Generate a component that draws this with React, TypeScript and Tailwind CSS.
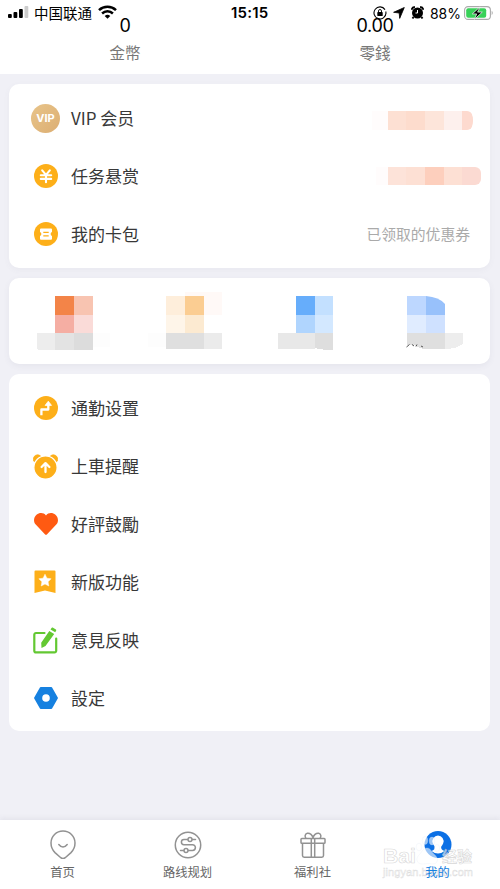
import type { ReactNode } from 'react';

interface MenuItem {
  label: string;
  icon: ReactNode;
  extra?: ReactNode;
}

const VipIcon = () => (
  <div className="w-[29px] h-[29px] shrink-0 rounded-full bg-linear-to-br from-[#e8c48a] to-[#dcae72] flex items-center justify-center text-white font-bold text-[11px] font-['Inter',sans-serif]">
    VIP
  </div>
);

const YenIcon = () => (
  <svg width="24" height="24" viewBox="0 0 24 24" fill="none">
    <circle cx="12" cy="12" r="12" fill="#fdaf19" />
    <path d="M8.2 6.3l3.800 4.6 3.800-4.6M12 11v7.2M6.8 11.300h10.4M6.8 14.900h10.4" stroke="#fff" strokeWidth="2.100" strokeLinecap="round" />
  </svg>
);

const TicketIcon = () => (
  <svg width="24" height="24" viewBox="0 0 24 24" fill="none">
    <circle cx="12" cy="12" r="12" fill="#fdaf19" />
    <path d="M7 6.4h10a1 1 0 0 1 1 1v2.700a2 2 0 0 0 0 3.800v2.900a1 1 0 0 1-1 1H7a1 1 0 0 1-1-1v-2.900a2 2 0 0 0 0-3.800V7.4a1 1 0 0 1 1-1z" fill="#fff" />
    <path d="M9.3 10.4h5.4M9.3 13.8h5.4" stroke="#fdaf19" strokeWidth="1.2" />
  </svg>
);

const RouteIcon = () => (
  <svg width="24" height="24" viewBox="0 0 24 24" fill="none">
    <circle cx="12" cy="12" r="12" fill="#fdaf19" />
    <path d="M7.400 19.200v-5.700h6.900V8" stroke="#fff" strokeWidth="2.300" strokeLinejoin="round" />
    <path d="M14.300 5.200l3.200 4.200h-6.400z" fill="#fff" stroke="#fff" strokeWidth=".8" strokeLinejoin="round" />
  </svg>
);

const AlarmIcon = () => (
  <svg width="25" height="25" viewBox="0 0 25 25" fill="none">
    <path d="M.8 7.200A4.200 4.200 0 0 1 8.500 3.200L2 8zM24.200 7.200a4.200 4.200 0 0 0-7.700-4L23 8z" fill="#fdaf19" stroke="#fdaf19" strokeWidth=".8" />
    <circle cx="12.500" cy="13.500" r="11.600" fill="#fdaf19" stroke="#fff" strokeWidth="1.200" />
    <path d="M12.500 18V9.200M8.600 13l3.900-3.900 3.900 3.900" stroke="#fff" strokeWidth="2.300" strokeLinecap="round" strokeLinejoin="round" />
  </svg>
);

const HeartIcon = () => (
  <svg width="24" height="22" viewBox="0 0 24 22">
    <path d="M12 2.400C14.400-.5 18.600-.6 21.500 1.800c3.200 2.900 3.300 7.400.3 10.300l-8.700 9.200c-.6.7-1.600.7-2.200 0l-8.700-9.200C-.8 9.200-.7 4.700 2.500 1.800 5.400-.6 9.600-.5 12 2.400z" fill="#ff5a12" />
  </svg>
);

const BookmarkIcon = () => (
  <svg className="mr-px" width="22" height="24" viewBox="0 0 22 24">
    <path d="M1.500.5h19q1 0 1 1v21.500l-10.500-2.500L.5 23V1.500q0-1 1-1z" fill="#fdaf19" />
    <path d="M11 4.200l1.900 4 4.200.6-3 3 .7 4.200-3.800-2-3.800 2 .7-4.200-3-3 4.200-.6z" fill="#fff" stroke="#fff" strokeWidth=".5" strokeLinejoin="round" />
  </svg>
);

const EditIcon = () => (
  <svg width="25" height="27" viewBox="0 0 25 27" fill="none">
    <path d="M11.500 6H3a1.700 1.700 0 0 0-1.700 1.700v16A1.700 1.700 0 0 0 3 25.400h18.500a1.700 1.700 0 0 0 1.700-1.700V11.500" stroke="#63c832" strokeWidth="2.200" strokeLinecap="round" />
    <path d="M16.300 3.900l4.900 3-8.700 12.100-4 2-.3-5.200zM17.500 2.400l1-1.500q.5-.7 1.200-.3l3.200 2q.7.500.2 1.200l-.9 1.500z" fill="#63c832" />
  </svg>
);

const SettingIcon = () => (
  <svg width="24" height="22" viewBox="0 0 24 22">
    <path d="M6.700 1h10.600L23 11l-5.700 10H6.700L1 11z" fill="#1681e0" stroke="#1681e0" strokeWidth="1.800" strokeLinejoin="round" />
    <circle cx="12" cy="11" r="3.800" fill="#fff" />
  </svg>
);

const VipMask = () => (
  <div className="mr-[6px] mt-1 flex h-[19px]">
    <div className="w-4 bg-[#fffcfc]" />
    <div className="flex w-[85px] rounded-r-[4px_9px] overflow-hidden">
      <div className="w-[18px] bg-[#fde0d3]" />
      <div className="w-[19px] bg-[#fddccd]" />
      <div className="w-[19px] bg-[#fde5da]" />
      <div className="w-[18px] bg-[#fdf0ed]" />
      <div className="flex-1 rounded-r-[6px] bg-[#fddacf]" />
    </div>
  </div>
);

const TaskMask = () => (
  <div className="-mr-[2px] flex h-[18px]">
    <div className="w-3 bg-[#fffcfc]" />
    <div className="flex w-[93px]">
      <div className="w-[18px] bg-[#fde3d9]" />
      <div className="w-[19px] bg-[#fde0d4]" />
      <div className="w-[19px] bg-[#fdcfbd]" />
      <div className="w-[18px] bg-[#fde0d4]" />
      <div className="flex-1 rounded-r-[6px] bg-[#fbdad2]" />
    </div>
  </div>
);

const accountItems: MenuItem[] = [
  { label: 'VIP 会员', icon: <VipIcon />, extra: <VipMask /> },
  { label: '任务悬赏', icon: <YenIcon />, extra: <TaskMask /> },
  {
    label: '我的卡包',
    icon: <TicketIcon />,
    extra: <span className="mr-[9px] text-[14.800px] text-[#aaa]">已领取的优惠券</span>,
  },
];

const settingItems: MenuItem[] = [
  { label: '通勤设置', icon: <RouteIcon /> },
  { label: '上車提醒', icon: <AlarmIcon /> },
  { label: '好評鼓勵', icon: <HeartIcon /> },
  { label: '新版功能', icon: <BookmarkIcon /> },
  { label: '意見反映', icon: <EditIcon /> },
  { label: '設定', icon: <SettingIcon /> },
];

const MenuList = ({ items }: { items: MenuItem[] }) => (
  <>
    {items.map((item) => (
      <div key={item.label} className="flex h-[58px] items-center pl-[22px] pr-[11px]">
        <div className="flex w-[29px] justify-center">{item.icon}</div>
        <span className="ml-[11px] flex-1 text-[17px] text-[#383838]">{item.label}</span>
        {item.extra}
      </div>
    ))}
  </>
);

const StatusBar = () => (
  <div className="flex h-[25px] items-center pl-2 pr-[6px]">
    <svg width="21" height="13" viewBox="0 0 21 13">
      <rect x="0" y="8" width="3.800" height="4" rx="1" />
      <rect x="5.500" y="6" width="3.800" height="6" rx="1" />
      <rect x="11" y="3" width="3.800" height="9" rx="1" />
      <rect x="16.500" y="0" width="3.800" height="12" rx="1" fill="#ccc" />
    </svg>
    <span className="ml-[5px] text-[14.500px]">中国联通</span>
    <svg className="ml-[6px] mb-[2px]" width="19" height="14" viewBox="0 0 19 14" fill="none" stroke="#000" strokeWidth="2.500">
      <path d="M1 5.200a12.300 12.300 0 0 1 17 0M4.100 8.500a7.800 7.800 0 0 1 10.800 0" />
      <path d="M6.700 11a4.100 4.100 0 0 1 5.600 0l-2.800 2.800z" fill="#000" stroke="none" />
    </svg>
    <span className="ml-[114px] mt-[2px] text-[15px] font-semibold tracking-[0.200px] font-['Inter',sans-serif]">15:15</span>
    <div className="ml-auto flex items-center">
      <svg className="mr-px" width="14" height="14" viewBox="0 0 14 14" fill="none">
        <path d="M12 3.600A6 6 0 1 0 13 7M12.900 5.500V8" stroke="#000" strokeWidth="1.100" />
        <rect x="4.300" y="6.100" width="5.400" height="4" rx=".7" fill="#000" />
        <path d="M5.500 6.500V5a1.500 1.500 0 0 1 3 0v1.500" stroke="#000" strokeWidth=".9" />
      </svg>
      <svg className="ml-[5px]" width="12" height="12" viewBox="0 0 12 12">
        <path d="M11.300.5L6.700 11.400 6.200 6 .6 5.300z" stroke="#000" strokeWidth=".8" strokeLinejoin="round" />
      </svg>
      <svg className="ml-[6px]" width="13" height="13" viewBox="0 0 13 13" fill="none">
        <path d="M.8 3.700Q1 1.200 3.900 1M12.200 3.700Q12 1.200 9.100 1M2.500 11L1.500 12.500M10.500 11l1 1.500" stroke="#000" strokeWidth="1.900" />
        <circle cx="6.500" cy="7" r="5.500" fill="#000" />
        <path d="M6.500 4v3H4.500" stroke="#fff" />
      </svg>
      <span className="ml-[6px] mt-px text-[14px] font-['Inter',sans-serif]">88%</span>
      <svg className="ml-[3px]" width="30" height="14" viewBox="0 0 30 14">
        <rect x=".6" y=".6" width="25.800" height="12.800" rx="3.500" fill="none" stroke="#aaa" strokeWidth="1.100" />
        <rect x="2.200" y="2.200" width="20" height="9.600" rx="2" fill="#38d158" />
        <path d="M27.700 4.800q2.100 2.200 0 4.400z" fill="#aaa" />
        <path d="M16 .9L8.300 7.900h4.400l-2.200 5.400 7.800-7.200h-4.700z" stroke="#fff" strokeWidth=".7" />
      </svg>
    </div>
  </div>
);

const MosaicRow = () => (
  <div className="ml-[9px] mt-[10px] h-[86px] w-[481px] shrink-0 rounded-[10px] bg-white shadow-[0_2px_6px_rgba(90,90,120,0.07)]">
    <svg width="481" height="86" viewBox="9 278 481 86" shapeRendering="crispEdges">
      <rect x="55" y="296" width="19" height="19" fill="#f38448" />
      <rect x="74" y="296" width="19" height="19" fill="#f8c4b1" />
      <rect x="55" y="315" width="19" height="18" fill="#f5aea3" />
      <rect x="74" y="315" width="19" height="18" fill="#fadbd8" />
      <path d="M37 333h18v17H40q-3 0-3-3z" fill="#ededed" />
      <rect x="55" y="333" width="19" height="17" fill="#e3e3e3" />
      <rect x="74" y="333" width="19" height="17" fill="#dcdcdc" />
      <rect x="93" y="333" width="17" height="14" fill="#fdfdfd" />

      <rect x="166" y="296" width="19" height="19" fill="#feeedb" />
      <rect x="185" y="296" width="19" height="19" fill="#fbcd92" />
      <path d="M185 292h37v23h-18v-19h-19z" fill="#fff9f7" />
      <rect x="166" y="315" width="19" height="18" fill="#fef5e9" />
      <rect x="185" y="315" width="19" height="18" fill="#fcead1" />
      <rect x="148" y="333" width="18" height="14" fill="#fdfdfd" />
      <rect x="166" y="333" width="38" height="16" fill="#dfdfdf" />
      <rect x="204" y="333" width="18" height="16" fill="#ebebeb" />

      <rect x="296" y="296" width="19" height="19" fill="#66adfb" />
      <rect x="315" y="296" width="18" height="19" fill="#c3e0ff" />
      <rect x="296" y="315" width="19" height="18" fill="#b0d5fe" />
      <rect x="315" y="315" width="18" height="18" fill="#d3e8ff" />
      <rect x="278" y="333" width="37" height="16" fill="#e8e8e8" />
      <path d="M315 333h18v17q-11 0-18-2z" fill="#dedede" />

      <rect x="407" y="296" width="19" height="19" fill="#bdd7ff" />
      <path d="M426 296q13 1 19 8v11h-19z" fill="#98c1fb" shapeRendering="auto" />
      <rect x="407" y="315" width="19" height="18" fill="#e0ecff" />
      <rect x="426" y="315" width="19" height="18" fill="#cfe1ff" />
      <path d="M407 333h38v16h-19q-6 0-10-3-4-2-9-1z" fill="#dfdfdf" />
      <path d="M445 333h18v11q-7 5-18 5z" fill="#ededed" />
      <path d="M406.500 347l3-2.500M412 344.500l2 1.500M416 346.500l1-2M421 346l2 1" stroke="#555" shapeRendering="auto" />
    </svg>
  </div>
);

const tabs = [
  {
    label: '首页',
    icon: (
      <svg width="28" height="30" viewBox="0 0 28 30" fill="none" stroke="#929292" strokeWidth="1.500">
        <path d="M6 23.600C3.400 21 2 17.200 2 14a12 12 0 0 1 24 0c0 3.200-1.400 7-4 9.600l-5.800 5.100q-2.200 1.700-4.400 0z" />
        <path d="M9.800 15.500q4.200 5.200 8.400 0" strokeLinecap="round" />
      </svg>
    ),
  },
  {
    label: '路线规划',
    icon: (
      <svg width="28" height="30" viewBox="0 0 28 30" fill="none" stroke="#929292" strokeWidth="1.500">
        <circle cx="14" cy="16" r="12.700" />
        <path d="M21.500 10.500h-3M13.500 10.500H10a2.600 2.600 0 0 0 0 5.200h8.500a2.900 2.900 0 0 1 0 5.800h-4M9.500 21.500h-3" strokeLinecap="round" />
        <circle cx="16" cy="10.500" r="2" />
        <circle cx="12" cy="21.500" r="2" />
      </svg>
    ),
  },
  {
    label: '福利社',
    icon: (
      <svg width="28" height="30" viewBox="0 0 28 30" fill="none" stroke="#929292" strokeWidth="1.500">
        <rect x="2" y="9.500" width="24" height="4.800" rx=".8" />
        <path d="M3.500 14.300v12.200q0 1.700 1.700 1.700h17.600q1.700 0 1.700-1.700V14.300M12.300 9.500v18.700M15.700 9.500v18.700M14 9C13.500 6 11 3.800 8.300 4.200 5.900 4.700 5.500 8 7 9.500M14 9c.5-3 3-5.200 5.700-4.800C22.100 4.700 22.500 8 21 9.500" />
      </svg>
    ),
  },
  {
    label: '我的',
    icon: (
      <svg width="28" height="30" viewBox="0 0 28 30">
        <circle cx="14" cy="15.500" r="13.500" fill="#0c70e5" />
        <path d="M14 6.500a5.700 5.700 0 0 0-5.200 7.700c.5 1.500 1.500 2.500 2 3.500.5 2-.8 3.200-3.300 4.300q6.500 5 13 0c-2.500-1.100-3.800-2.300-3.300-4.300.5-1 1.500-2 2-3.500A5.700 5.700 0 0 0 14 6.500z" fill="#fff" />
      </svg>
    ),
  },
];

const Watermark = () => (
  <svg className="absolute left-[380px] top-[13px]" width="100" height="55" viewBox="380 833 100 55" fill="#fff" fillOpacity=".6" stroke="#bbb" strokeOpacity=".6" strokeWidth=".6">
    <text x="383" y="863" fontSize="20" fontWeight="700" fontFamily="Liberation Sans, sans-serif" textLength="33" lengthAdjust="spacingAndGlyphs">Bai</text>
    <g stroke="#dce6f2" strokeWidth=".4">
      <ellipse cx="419" cy="847" rx="2.800" ry="3.800" />
      <ellipse cx="425" cy="840.500" rx="2.800" ry="4" />
      <ellipse cx="432" cy="841" rx="2.800" ry="4" />
      <ellipse cx="437" cy="848" rx="2.600" ry="3.600" />
      <path d="M427 848c-4 0-5 4-8 7-4 4-2 9 3 9 4 0 7-1 10 0 6 0 7-5 3-9-4-3-4-7-8-7z" />
    </g>
    <text x="442" y="862" fontSize="15" fontWeight="700" fontFamily="Noto Sans CJK SC, sans-serif" textLength="30">经验</text>
    <text x="383" y="876" fontSize="11" fillOpacity=".3" strokeOpacity=".5" strokeWidth=".5" fontFamily="Liberation Sans, sans-serif" textLength="90">jingyan.baidu.com</text>
  </svg>
);

const App = () => {
  return (
    <div className="flex h-[889px] w-[500px] flex-col overflow-hidden bg-[#f0f0f6] text-black font-['Noto_Sans_CJK_SC',sans-serif]">
      <header className="h-[74px] shrink-0 bg-white">
        <StatusBar />
        <div className="-mt-[11px] grid grid-cols-2 text-center">
          <div>
            <div className="h-[23px] text-[18px] leading-[23px] tracking-[-0.300px] font-['Inter',sans-serif]">0</div>
            <div className="mt-[3px] text-[15.500px] leading-6 text-[#777]">金幣</div>
          </div>
          <div>
            <div className="h-[23px] text-[18px] leading-[23px] tracking-[-0.300px] font-['Inter',sans-serif]">0.00</div>
            <div className="mt-[3px] text-[15.500px] leading-6 text-[#777]">零錢</div>
          </div>
        </div>
      </header>

      {/* Account */}
      <section className="ml-[9px] mt-[10px] h-[184px] w-[481px] shrink-0 rounded-[10px] bg-white pt-[5px] shadow-[0_2px_6px_rgba(90,90,120,0.05)]">
        <MenuList items={accountItems} />
      </section>

      <MosaicRow />

      {/* Settings */}
      <section className="ml-[9px] mt-[10px] h-[357px] w-[481px] shrink-0 rounded-[10px] bg-white pt-[5px]">
        <MenuList items={settingItems} />
      </section>

      {/* Tab bar */}
      <nav className="relative mt-auto grid h-[69px] shrink-0 grid-cols-4 bg-white pt-[9px] shadow-[0_-2px_5px_rgba(90,90,120,0.08)]">
        {tabs.map((tab) => (
          <div key={tab.label} className="flex flex-col items-center">
            {tab.icon}
            <span className={`relative z-10 mt-[4px] text-[12.300px] leading-[18px] ${tab.label === '我的' ? 'text-[#1681e0]' : 'text-[#666]'}`}>
              {tab.label}
            </span>
          </div>
        ))}
        <Watermark />
      </nav>
    </div>
  );
};

export default App;
